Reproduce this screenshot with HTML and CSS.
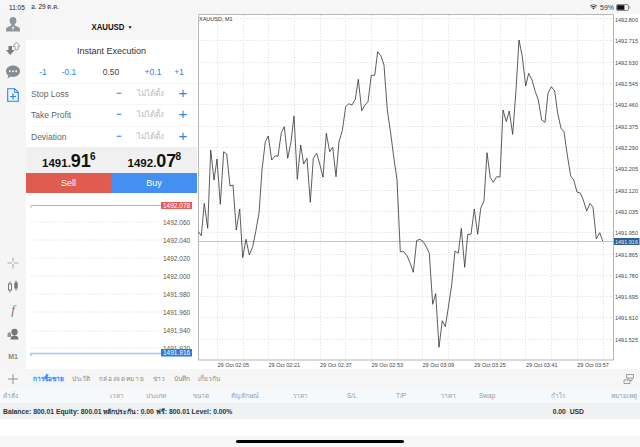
FILE: index.html
```html
<!DOCTYPE html>
<html lang="th">
<head>
<meta charset="utf-8">
<title>XAUUSD</title>
<link rel="stylesheet" href="styles.css">
</head>
<body>
<div class="app">
  <header class="status">
    <span class="status-time">11:05</span>
    <span class="status-date">อ. 29 ต.ค.</span>
    <span class="status-right">
      <svg class="wifi" viewBox="0 0 10 8"><path d="M5 7.600 3.400 5.900a2.400 2.400 0 0 1 3.200 0zM2.500 5 1.600 4a5 5 0 0 1 6.800 0l-.9 1a3.700 3.700 0 0 0-5 0zM.8 3.200 0 2.300a7.300 7.300 0 0 1 10 0l-.8.9a6.100 6.100 0 0 0-8.400 0z"/></svg>
      <span>59%</span>
      <svg class="battery" viewBox="0 0 15 7"><rect x=".5" y=".5" width="12" height="6" rx="1.500" fill="none" stroke="#888"/><rect x="1.200" y="1.200" width="7.200" height="4.600" fill="#111"/><path d="M13.500 2.300c.6.2.8.6.8 1.200s-.2 1-.8 1.200z" fill="#888"/></svg>
    </span>
  </header>

  <main class="main">
    <nav class="rail">
      <div class="rail-group">
        <svg class="ri" viewBox="0 0 16 16"><path d="M8 0c2.200 0 3.400 1.700 3.400 3.700 0 1.500-.7 2.900-1.600 3.600v1.100l4.200 2c.7.400 1 1 1 4.100H1c0-3.100.3-3.700 1-4.100l4.200-2V7.300C5.300 6.600 4.600 5.200 4.600 3.700 4.600 1.700 5.800 0 8 0z" fill="#8f959b"/><path d="M6.800 9.800 8 14l1.200-4.200" fill="#e8e8e8"/></svg>
        <svg class="ri" viewBox="0 0 16 16"><path d="M3.500 6h3.500v4h2.500L5.250 15 1 10h2.500z" fill="#777c82"/><path d="M11.500 2 15 6.300h-2v3.400h-3V6.300H8z" fill="#f5f5f5" stroke="#8f959b" stroke-width=".8"/></svg>
        <svg class="ri" viewBox="0 0 16 16"><path d="M8 1.500c3.900 0 7 2.500 7 5.700s-3.100 5.700-7 5.700c-.8 0-1.500-.1-2.200-.3L2.500 14.500l.8-3C1.900 10.400 1 8.900 1 7.200 1 4 4.100 1.500 8 1.500z" fill="#868c92"/><circle cx="4.800" cy="7.200" r="1" fill="#eee"/><circle cx="8" cy="7.200" r="1" fill="#eee"/><circle cx="11.200" cy="7.200" r="1" fill="#eee"/></svg>
        <svg class="ri" viewBox="0 0 16 16"><path d="M2.700 1.700h7l3.600 3.600v9H2.700z" fill="none" stroke="#2a84ea" stroke-width="1.100"/><path d="M9.500 1.700v3.800h3.800" fill="none" stroke="#2a84ea" stroke-width=".9"/><path d="M8 6.500v6M5 9.500h6" stroke="#2a84ea" stroke-width="1.200"/></svg>
      </div>
      <div class="rail-group rail-tools">
        <svg class="ri" viewBox="0 0 16 16"><path d="M8 2.500v4.500M8 9v4.500M2.500 8H7M9 8h4.500" stroke="#aaa" stroke-width="1"/></svg>
        <svg class="ri" viewBox="0 0 16 16"><path d="M5 2.500v11M11 1.500v10" stroke="#777" stroke-width="1"/><rect x="3.500" y="5" width="3" height="6" fill="#f4f4f4" stroke="#777"/><rect x="9.300" y="3.500" width="3.400" height="6" fill="#777"/></svg>
        <span class="ri-f">f</span>
        <svg class="ri" viewBox="0 0 16 16"><circle cx="9.500" cy="6" r="3.200" fill="#70767c"/><path d="M5.500 13.500c0-2.800 1.400-4 4-4s4 1.200 4 4z" fill="#70767c"/><path d="M2.500 7.500l2-1.500 1.500 1.500v3.500H2.500z" fill="#8f959b"/></svg>
        <span class="ri-m">M1</span>
      </div>
    </nav>

    <section class="panel">
      <div class="symbol"><b>XAUUSD</b><i>▼</i></div>
      <div class="exec">Instant Execution</div>
      <div class="lots">
        <span class="blue">-1</span><span class="blue">-0.1</span><span class="lot">0.50</span><span class="blue">+0.1</span><span class="blue">+1</span>
      </div>
      <div class="param"><span class="pname">Stop Loss</span><span class="step minus">−</span><span class="pval">ไม่ได้ตั้ง</span><span class="step">+</span></div>
      <div class="param"><span class="pname">Take Profit</span><span class="step minus">−</span><span class="pval">ไม่ได้ตั้ง</span><span class="step">+</span></div>
      <div class="param"><span class="pname">Deviation</span><span class="step minus">−</span><span class="pval">ไม่ได้ตั้ง</span><span class="step">+</span></div>
      <div class="quotes">
        <div class="quote">1491.<big>91</big><sup>6</sup></div>
        <div class="quote">1492.<big>07</big><sup>8</sup></div>
      </div>
      <div class="actions">
        <button class="sell">Sell</button>
        <button class="buy">Buy</button>
      </div>
      <svg class="depth" viewBox="0 0 171 175">
        <g class="depth-grid">
          <path d="M5 29H134M5 47H134M5 65H134M5 83H134M5 101H134M5 119H134M5 138H134M5 155H134"/>
        </g>
        <g class="depth-text">
          <text x="137" y="31.500">1492.060</text><text x="137" y="49.500">1492.040</text><text x="137" y="67.500">1492.020</text><text x="137" y="85.500">1492.000</text><text x="137" y="103.500">1491.980</text><text x="137" y="121.500">1491.960</text><text x="137" y="140">1491.940</text><text x="137" y="157.500">1491.920</text>
        </g>
        <path d="M5 15V12.500H135" class="line-red"/>
        <rect x="135" y="9" width="31" height="7" class="tag-red"/>
        <text x="137" y="14.700" class="tag-text">1492.078</text>
        <path d="M5 163V160.500H135" class="line-blue"/>
        <rect x="135" y="156" width="31" height="7.500" class="tag-blue"/>
        <text x="137" y="162" class="tag-text">1491.916</text>
      </svg>
    </section>

    <section class="chart">
      <svg class="chart-svg" viewBox="0 0 443 357">
        <g class="grid" transform="translate(-197 -14)">
          <path d="M198 18.500H613M198 40.500H613M198 62.500H613M198 83.500H613M198 104.500H613M198 126.500H613M198 147.500H613M198 168.500H613M198 190.500H613M198 211.500H613M198 232.500H613M198 254.500H613M198 275.500H613M198 296.500H613M198 317.500H613M198 339.500H613"/>
          <path d="M217.500 15V360M243.500 15V360M268.500 15V360M294.500 15V360M320.500 15V360M345.500 15V360M371.500 15V360M397.500 15V360M422.500 15V360M448.500 15V360M474.500 15V360M500.500 15V360M525.500 15V360M551.500 15V360M577.500 15V360M603.500 15V360"/>
        </g>
        <g transform="translate(-197 -14)">
          <path class="bid" d="M198 241.500H613"/>
          <path class="frame" d="M198.500 360V14.500H613.500V360H198.500"/>
          <polyline class="price" points="198.300,231.700 201.300,235.700 204.300,203.300 207.700,228.300 210.700,150 214,180 217,159 220.300,204.300 223.700,151.700 226.700,154 230,186 233,185 236.300,230 239.700,209 242.700,257.700 246,239.300 249.300,255 252.700,246.700 255.700,231.700 259,213.300 262,170 265.300,141.700 268.300,136 271.700,160 275,156 278,156 281.300,132.700 284.300,126.700 287.700,158.300 291,141.700 294,116 297.300,179.300 300.700,145 303.700,164 307,158.300 310.300,202.300 313.300,158.300 316.700,153.300 320,165 323,177.300 326.300,133.300 329.700,151.700 332.700,147.300 336,176.700 339,141.700 342.300,130.700 345.700,106.700 348.700,103.700 352,105 355.300,99.300 358.300,79.300 361.700,110.700 365,105 368,101.700 371.300,75.300 374.700,75.300 377.700,51.700 381,56 384,65 387.300,110 390.700,133.300 393.700,156.700 397,180 400.300,251.700 403.700,251.700 407,255.700 410.300,263.300 413.300,272.300 416.700,240.500 420,239.300 423.300,241.700 426.300,246.700 429.300,253.300 432.700,304.300 435.700,293.700 439,347.300 442.300,320.700 445.300,326.700 448.700,305 451.700,285 455,251 458.300,253.300 461.300,228.300 464.700,267.300 467.700,234.300 471,234.300 474.300,209 477.700,234.300 480.700,208.300 484,200.700 487,152.700 490.300,177.700 493.300,182.300 496.700,176.700 500,177 503,110 506.300,121.700 509.300,111 512.700,134.300 516,90 519,40 522.300,56.700 525.700,86 528.700,73.300 532,80 535.300,91.700 538.300,100 541.700,120 545,122.300 548,93.300 551.300,86.700 554.700,91 557.700,113.300 561,128.300 564,131.700 567.300,155 570.700,176 573.700,180 577,192 580.300,193 583.300,200 586.700,211 590,203.300 593,207.300 596.300,239 599.700,232.700 602.700,241"/>
          <text class="ctitle" x="199" y="20.500">XAUUSD, M1</text>
          <g class="ylabels">
            <text x="615" y="21.500">1492.800</text><text x="615" y="42.500">1492.715</text><text x="615" y="64.500">1492.630</text><text x="615" y="85.500">1492.545</text><text x="615" y="106.500">1492.460</text><text x="615" y="128.500">1492.375</text><text x="615" y="149.500">1492.290</text><text x="615" y="170.500">1492.205</text><text x="615" y="192.500">1492.120</text><text x="615" y="213.500">1492.035</text><text x="615" y="234.500">1491.950</text><text x="615" y="256.500">1491.865</text><text x="615" y="277.500">1491.780</text><text x="615" y="298.500">1491.695</text><text x="615" y="319.500">1491.610</text><text x="615" y="341.500">1491.525</text>
          </g>
          <rect class="bidtag" x="614" y="238" width="25.500" height="7"/>
          <text class="bidtext" x="615" y="243.700">1491.916</text>
          <g class="xlabels">
            <text x="217.500" y="366.500">29 Oct 02:05</text><text x="268.500" y="366.500">29 Oct 02:21</text><text x="320" y="366.500">29 Oct 02:37</text><text x="371.500" y="366.500">29 Oct 02:53</text><text x="422.500" y="366.500">29 Oct 03:09</text><text x="474.300" y="366.500">29 Oct 03:25</text><text x="526" y="366.500">29 Oct 03:41</text><text x="577.300" y="366.500">29 Oct 03:57</text>
          </g>
        </g>
      </svg>
    </section>
  </main>

  <div class="tabs">
    <svg class="tab-plus" viewBox="0 0 12 12"><path d="M6 1v10M1 6h10" stroke="#888" stroke-width=".9"/></svg>
    <span class="tab active">การซื้อขาย</span>
    <span class="tab">ประวัติ</span>
    <span class="tab tab-wide">กล่องจดหมาย</span>
    <span class="tab">ข่าว</span>
    <span class="tab">บันทึก</span>
    <span class="tab">เกี่ยวกับ</span>
    <svg class="tab-layout" viewBox="0 0 12 12"><path d="M3.500 1.500h7v3.500h-7zM1 7h6v3.500H1zM5 5v2M9 5v2.500H7" fill="none" stroke="#888" stroke-width=".8"/></svg>
  </div>

  <div class="cols">
    <span>คำสั่ง</span>
    <span>เวลา</span>
    <span>ประเภท</span>
    <span>ขนาด</span>
    <span>สัญลักษณ์</span>
    <span>ราคา</span>
    <span>S/L</span>
    <span>T/P</span>
    <span>ราคา</span>
    <span>Swap</span>
    <span>กำไร</span>
    <span class="c-note">หมายเหตุ</span>
  </div>

  <div class="balance">
    <span>Balance: 800.01 Equity: 800.01 หลักประกัน: 0.00 ฟรี: 800.01 Level: 0.00%</span>
    <span class="total">0.00&nbsp; USD</span>
  </div>

  <div class="blank"></div>
  <footer class="home"><span class="indicator"></span></footer>
</div>
</body>
</html>
```
FILE: styles.css
```css
* { box-sizing: border-box; }
html, body { margin: 0; padding: 0; background: #fff; }
body { font-family: "Liberation Sans", "Noto Sans", "DejaVu Sans", sans-serif; overflow: hidden; }
.app { width: 640px; height: 447px; display: flex; flex-direction: column; overflow: hidden; }

.status { height: 14px; background: #f6f6f6; display: flex; align-items: center; padding: 0 9px 0 9px; font-size: 6.500px; color: #222; gap: 6px; flex: none; }
.status-right { margin-left: auto; display: flex; align-items: center; gap: 2px; font-size: 7px; color: #333; }
.wifi { width: 7px; height: 6px; fill: #222; margin-right: 1px; }
.battery { width: 15px; height: 7px; }

.main { display: flex; height: 355px; flex: none; background: #f5f5f5; }
.rail { width: 26px; flex: none; display: flex; flex-direction: column; justify-content: space-between; align-items: center; padding: 3px 0 4px; }
.rail-group { display: flex; flex-direction: column; align-items: center; gap: 7.300px; }
.rail-tools { gap: 7.500px; }
.ri { width: 16px; height: 16px; display: block; }
.ri-f { font: italic 13px/16px "Liberation Serif", serif; color: #777; height: 16px; }
.ri-m { font-size: 7px; font-weight: 700; color: #888; line-height: 16px; height: 16px; }

.panel { width: 171px; flex: none; background: #fff; display: flex; flex-direction: column; }
.symbol { height: 26px; background: #f6f6f6; display: flex; align-items: center; justify-content: center; gap: 3px; font-size: 8.500px; color: #111; flex: none; }
.symbol b { display: inline-block; transform: scaleX(.92); margin: 0 -1px; }
.symbol i { font-style: normal; font-size: 5px; }
.exec { height: 21px; display: flex; align-items: center; justify-content: center; font-size: 9px; color: #333; flex: none; }
.lots { height: 22px; display: grid; grid-template-columns: 18px 34px 50px 34px 18px; padding-left: 8px; align-items: center; text-align: center; font-size: 8.500px; flex: none; }
.blue { color: #2a84ea; }
.lot { color: #444; }
.param { height: 21.300px; margin-left: 5px; border-top: 1px solid #f6f6f6; display: grid; grid-template-columns: 84px 8px 1fr 12px; padding-right: 8px; align-items: center; font-size: 8.500px; color: #666; flex: none; }
.step { color: #2a84ea; text-align: center; font-size: 15px; line-height: 1; padding-bottom: 3px; }
.minus { font-size: 9px; font-weight: 700; padding-bottom: 1px; }
.pval { color: #bbb; font-size: 8px; text-align: center; padding-bottom: 1px; }
.quotes { height: 26px; background: #f0f0f0; display: grid; grid-template-columns: 1fr 1fr; flex: none; }
.quote { display: flex; align-items: baseline; justify-content: center; font-size: 11.500px; font-weight: 700; color: #111; padding-top: 5px; line-height: 18px; }
.quote big { font-size: 18px; line-height: 18px; }
.quote sup { font-size: 10px; line-height: 10px; align-self: flex-start; margin-left: -1px; }
.actions { display: grid; grid-template-columns: 85px 86px; height: 20px; flex: none; }
.actions button { border: 0; padding: 0; color: #fff; font: 9px "Liberation Sans", sans-serif; }
.sell { background: #e05b50; }
.buy { background: #4390f2; }
.depth { display: block; width: 171px; height: 175px; flex: none; }
.depth-grid path { stroke: #e4e4e4; stroke-width: 1; stroke-dasharray: 1.500 1.500; fill: none; }
.depth-text text { font-size: 6.500px; fill: #555; }
.line-red { fill: none; stroke: #eda29c; stroke-width: 1; }
.line-blue { fill: none; stroke: #a6c8ee; stroke-width: 1.500; }
.tag-red { fill: #e0605a; }
.tag-blue { fill: #2a7ae0; }
.tag-text { font-size: 6.500px; fill: #fff; }

.chart { flex: 1; background: #fff; min-width: 0; }
.chart-svg { display: block; width: 443px; height: 357px; overflow: visible; }
.grid path { fill: none; stroke: #e6e6e6; stroke-width: 1; stroke-dasharray: 1.500 1.500; }
.frame { fill: none; stroke: #b5b5b5; stroke-width: 1; }
.bid { stroke: #b9c5d6; stroke-width: 1; fill: none; }
.price { fill: none; stroke: #333; stroke-width: .8; stroke-linejoin: round; }
.ctitle { font-size: 5.500px; fill: #333; }
.ylabels text, .xlabels text { font-size: 5.500px; fill: #444; }
.bidtag { fill: #2c5f97; }
.bidtext { font-size: 5.500px; fill: #e6eef8; }

.tabs { height: 19px; position: relative; background: #f6f6f6; display: flex; align-items: center; padding: 0 5.500px 0 7px; gap: 8.500px; font-size: 6.500px; color: #888; flex: none; }
.tab-plus { width: 12px; height: 12px; margin-right: 5px; }
.tab.active { color: #2a84ea; background: #eef5fd; font-weight: 700; padding: 1px 1px; margin: 0 -1px; }
.tab-wide { letter-spacing: .7px; }
.tab-layout { width: 12px; height: 12px; margin-left: auto; }

.cols { height: 15px; background: #f5f9fc; font-size: 6.500px; color: #999; display: grid; grid-template-columns: 107px 36px 47px 38px 62px 54px 49px 45px 38px 72px 1fr 30px; align-items: center; padding: 0 3px; flex: none; }
.cols span { white-space: nowrap; }
.c-note { text-align: right; }

.balance { height: 16px; background: #eff1f3; display: flex; align-items: center; justify-content: space-between; padding: 0 56px 0 3px; font-size: 6.800px; font-weight: 700; color: #333; flex: none; }
.blank { height: 17px; background: #fff; flex: none; }
.home { flex: 1; background: #f6f6f6; display: flex; justify-content: center; padding-top: 4px; }
.indicator { width: 168px; height: 3px; border-radius: 2px; background: #000; }
```
